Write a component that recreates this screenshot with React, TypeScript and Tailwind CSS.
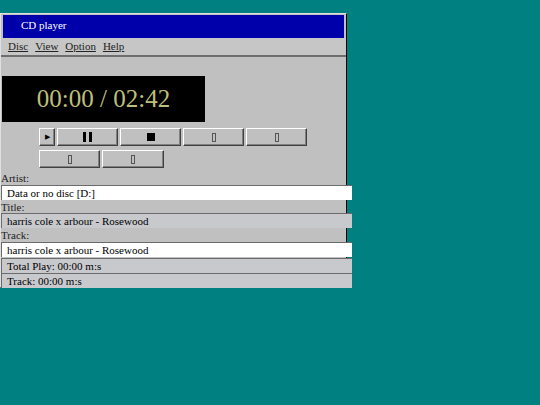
import React from "react";

const raised =
  "bg-[#c0c0c0] border border-t-white border-l-white border-r-[#404040] border-b-[#404040] shadow-[inset_-1px_-1px_0_#808080]";

function Tofu() {
  return <span className="inline-block w-[4px] h-[9px] border border-[#555]" />;
}

function Btn({ w, children }: { w: string; children?: React.ReactNode }) {
  return (
    <div className={`${raised} ${w} h-[18px] flex items-center justify-center`}>{children}</div>
  );
}

function Field({ text, white, extra }: { text: string; white?: boolean; extra?: string }) {
  return (
    <div
      className={`w-[351px] h-[15px] flex items-center pl-[5px] border-t border-l border-[#6b6b6b] text-[11px] leading-none text-black ${
        white ? "bg-white" : "bg-[#c8c9cd]"
      } ${extra ?? ""}`}
    >
      {text}
    </div>
  );
}

export default function App() {
  return (
    <div
      className="w-[540px] h-[405px] bg-[#008080] overflow-hidden pt-[13px]"
      style={{ fontFamily: '"Liberation Serif", "Times New Roman", serif' }}
    >
      <div className="w-[347px] h-[275px] bg-[#c0c0c0] border border-t-[#e0e0e0] border-l-[#e0e0e0] border-r-black border-b-black">
        {/* title bar */}
        <div className="mx-[2px] mt-px h-[23px] bg-[#0000aa] text-white text-[11px] leading-[13px] flex items-start pt-[4px] pl-[18px]">
          CD player
        </div>
        {/* menu */}
        <div className="h-[19px] bg-[#c6c6c6] border-b-2 border-[#6e6e6e] flex items-center gap-[7px] pl-[7px] text-[11px] text-[#222]">
          <span className="underline">Disc</span>
          <span className="underline">View</span>
          <span className="underline">Option</span>
          <span className="underline">Help</span>
        </div>

        {/* display */}
        <div className="mt-[19px] ml-px w-[203px] h-[46px] bg-black flex items-center justify-center text-[25px] text-[#bfbf7a]">
          00:00 / 02:42
        </div>

        {/* controls */}
        <div className="ml-[38px] mt-[6px] flex flex-col gap-[4px]">
          <div className="flex gap-[2px]">
            <Btn w="w-[16px]">
              <span className="text-[7px] leading-none">▶</span>
            </Btn>
            <Btn w="w-[61px]">
              <span className="flex gap-[3px]">
                <span className="w-[3px] h-[10px] bg-black" />
                <span className="w-[3px] h-[10px] bg-black" />
              </span>
            </Btn>
            <Btn w="w-[61px]">
              <span className="w-[8px] h-[8px] bg-black" />
            </Btn>
            <Btn w="w-[61px]">
              <Tofu />
            </Btn>
            <Btn w="w-[61px]">
              <Tofu />
            </Btn>
          </div>
          <div className="flex gap-[2px]">
            <Btn w="w-[61px]">
              <Tofu />
            </Btn>
            <Btn w="w-[62px]">
              <Tofu />
            </Btn>
          </div>
        </div>

        {/* info */}
        <div className="mt-[4px] text-[11px] text-[#222]">
          <div className="h-[13px] leading-[13px]">Artist:</div>
          <Field text="Data or no disc [D:]" white />
          <div className="h-[13px] leading-[14px]">Title:</div>
          <Field text="harris cole x arbour - Rosewood" />
          <div className="h-[14px] leading-[15px]">Track:</div>
          <Field text="harris cole x arbour - Rosewood" white extra="mb-px" />
          <Field text="Total Play: 00:00 m:s" />
          <Field text="Track: 00:00 m:s" />
        </div>
      </div>
    </div>
  );
}
